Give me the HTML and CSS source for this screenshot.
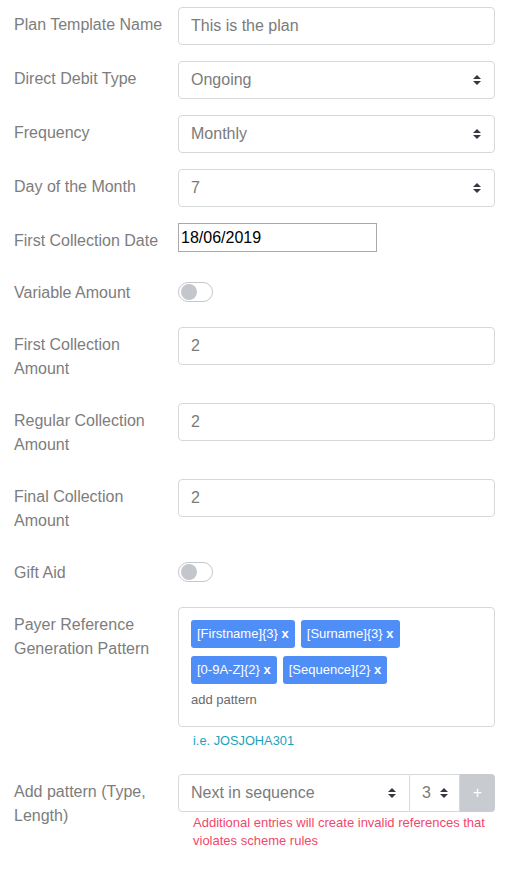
FILE: index.html
```html
<!DOCTYPE html>
<html>
<head>
<meta charset="utf-8">
<link rel="stylesheet" href="styles.css">
</head>
<body>
<form class="form">
  <div class="row">
    <label class="lbl">Plan Template Name</label>
    <div class="ctl"><div class="input">This is the plan</div></div>
  </div>
  <div class="row">
    <label class="lbl">Direct Debit Type</label>
    <div class="ctl"><div class="input select"><span>Ongoing</span><svg class="caret" width="8" height="10" viewBox="0 0 4 5"><path d="M2 0L0 2h4zm0 5L0 3h4z" fill="#343a40"/></svg></div></div>
  </div>
  <div class="row">
    <label class="lbl">Frequency</label>
    <div class="ctl"><div class="input select"><span>Monthly</span><svg class="caret" width="8" height="10" viewBox="0 0 4 5"><path d="M2 0L0 2h4zm0 5L0 3h4z" fill="#343a40"/></svg></div></div>
  </div>
  <div class="row">
    <label class="lbl">Day of the Month</label>
    <div class="ctl"><div class="input select"><span>7</span><svg class="caret" width="8" height="10" viewBox="0 0 4 5"><path d="M2 0L0 2h4zm0 5L0 3h4z" fill="#343a40"/></svg></div></div>
  </div>
  <div class="row">
    <label class="lbl">First Collection Date</label>
    <div class="ctl"><div class="date">18/06/2019</div></div>
  </div>
  <div class="row">
    <label class="lbl">Variable Amount</label>
    <div class="ctl"><div class="switch"><span class="knob"></span></div></div>
  </div>
  <div class="row">
    <label class="lbl">First Collection Amount</label>
    <div class="ctl"><div class="input">2</div></div>
  </div>
  <div class="row">
    <label class="lbl">Regular Collection Amount</label>
    <div class="ctl"><div class="input">2</div></div>
  </div>
  <div class="row">
    <label class="lbl">Final Collection Amount</label>
    <div class="ctl"><div class="input">2</div></div>
  </div>
  <div class="row">
    <label class="lbl">Gift Aid</label>
    <div class="ctl"><div class="switch"><span class="knob"></span></div></div>
  </div>
  <div class="row row-pattern">
    <label class="lbl">Payer Reference Generation Pattern</label>
    <div class="ctl">
      <div class="tagbox">
        <div class="tags">
          <span class="tag">[Firstname]{3} <b>x</b></span>
          <span class="tag">[Surname]{3} <b>x</b></span>
          <span class="tag">[0-9A-Z]{2} <b>x</b></span>
          <span class="tag">[Sequence]{2} <b>x</b></span>
        </div>
        <div class="addp">add pattern</div>
      </div>
      <div class="hint">i.e. JOSJOHA301</div>
    </div>
  </div>
  <div class="row">
    <label class="lbl">Add pattern (Type, Length)</label>
    <div class="ctl">
      <div class="group">
        <div class="input select g1"><span>Next in sequence</span><svg class="caret" width="8" height="10" viewBox="0 0 4 5"><path d="M2 0L0 2h4zm0 5L0 3h4z" fill="#343a40"/></svg></div>
        <div class="input select g2"><span>3</span><svg class="caret" width="8" height="10" viewBox="0 0 4 5"><path d="M2 0L0 2h4zm0 5L0 3h4z" fill="#343a40"/></svg></div>
        <div class="btn">+</div>
      </div>
      <div class="err">Additional entries will create invalid references that violates scheme rules</div>
    </div>
  </div>
</form>
</body>
</html>
```

FILE: styles.css
```css
* { box-sizing: border-box; }
html, body { margin: 0; padding: 0; background: #fff; }
body {
  font-family: "Liberation Sans", Arial, sans-serif;
  font-size: 16px;
  line-height: 24px;
  color: #7b7b7b;
}
.form {
  padding: 7px 22px 0 14px;
}
.row {
  display: grid;
  grid-template-columns: 152px 317px;
  column-gap: 12px;
  margin-bottom: 16px;
  align-items: start;
}
.lbl {
  padding: 6px 0;
  color: #7d7d7d;
  font-size: 16px;
  line-height: 24px;
}
.ctl { min-width: 0; }
.input {
  height: 38px;
  border: 1px solid #d6d9dc;
  border-radius: 4px;
  padding: 6px 12px;
  color: #7b7b7b;
  font-size: 16px;
  line-height: 24px;
  background: #fff;
}
.select {
  display: flex;
  align-items: center;
  justify-content: space-between;
}
.caret { flex: none; margin-right: 1px; }
.date {
  width: 199px;
  height: 29px;
  border: 1px solid #a9a9a9;
  padding: 0 2px;
  font-size: 16px;
  line-height: 27px;
  color: #000;
}
.switch {
  margin-top: 7px;
  width: 35px;
  height: 20px;
  border: 1px solid #c5c8cb;
  border-radius: 10px;
  padding: 1px;
  display: flex;
  align-items: center;
}
.knob {
  width: 16px;
  height: 16px;
  border-radius: 50%;
  background: #c3c6ca;
  margin-left: 1px;
}
.row-pattern { margin-bottom: 24px; }
.tagbox {
  border: 1px solid #d6d9dc;
  border-radius: 4px;
  padding: 12px 12px 16px 12px;
}
.tags {
  display: flex;
  flex-wrap: wrap;
  gap: 8px 6px;
}
.tag {
  background: #4f8df7;
  color: #fff;
  border-radius: 3px;
  height: 28px;
  line-height: 28px;
  padding: 0 6px;
  font-size: 13px;
}
.tag b { font-weight: bold; }
.addp {
  margin-top: 6px;
  font-size: 13px;
  line-height: 20px;
  color: #6a6a6a;
}
.hint {
  margin: 4px 0 0 15px;
  font-size: 12.8px;
  line-height: 19px;
  color: #1aa3b9;
}
.group {
  display: flex;
  height: 38px;
}
.g1 {
  width: 232px;
  border-radius: 4px 0 0 4px;
}
.g2 {
  width: 50px;
  border-left: 0;
  border-radius: 0;
  padding-left: 12px;
  padding-right: 10px;
}
.btn {
  width: 35px;
  background: #c8cbcf;
  color: #fff;
  border-radius: 0 4px 4px 0;
  display: flex;
  align-items: center;
  justify-content: center;
  font-size: 16px;
}
.err {
  margin: 2px 0 0 15px;
  font-size: 13px;
  line-height: 18px;
  color: #f2476b;
}
```
